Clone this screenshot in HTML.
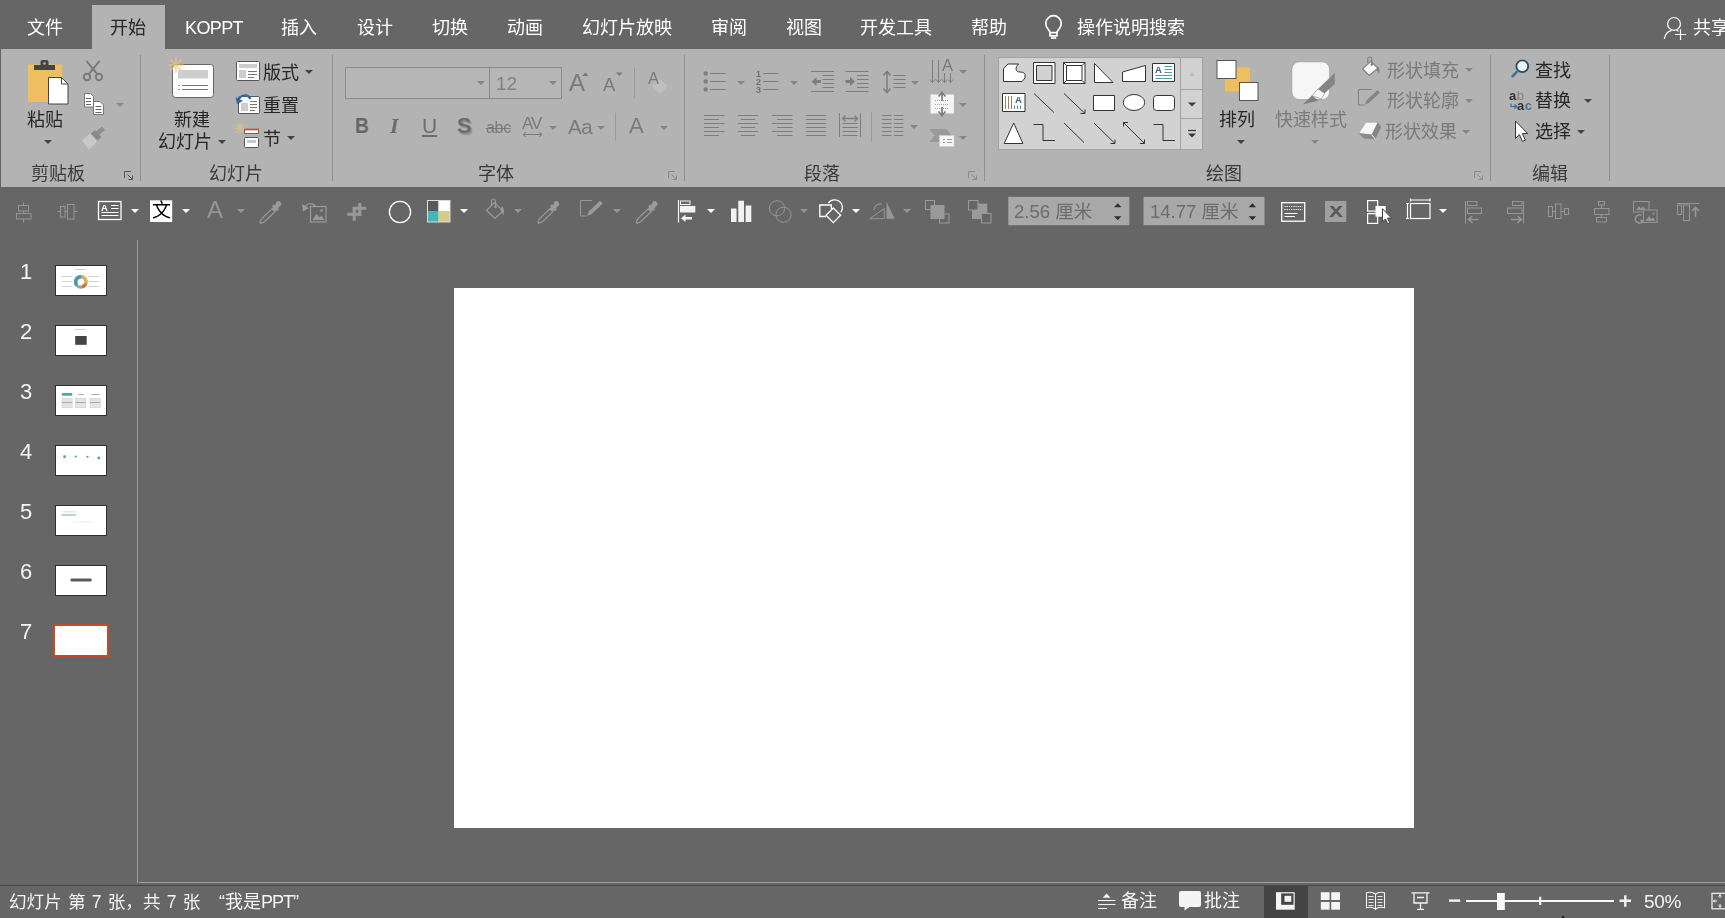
<!DOCTYPE html>
<html lang="zh-CN">
<head>
<meta charset="utf-8">
<title>PowerPoint</title>
<style>
*{box-sizing:border-box;margin:0;padding:0}
html,body{width:1725px;height:918px;overflow:hidden;background:#666666}
body{position:relative;font-family:"Liberation Sans","Noto Sans CJK SC",sans-serif;font-size:18px;color:#fff}
.a{position:absolute}
.t{position:absolute;white-space:nowrap;line-height:24px;height:24px;font-size:18px}
.t,.l{will-change:transform}
.d{color:#262626}
.g{color:#7a7a7a}
.lbl{color:#3a3a3a}
#tabs{position:absolute;left:0;top:0;width:1725px;height:50px;background:#666666}
#acttab{position:absolute;left:92px;top:5px;width:73px;height:46px;background:#b3b3b3}
#ribbon{position:absolute;left:1px;top:49.400px;width:1724px;height:137.600px;background:#b3b3b3}
.sep{position:absolute;top:55px;width:1px;height:126px;background:#8e8e8e}
.arr{position:absolute;width:0;height:0;border-left:4px solid transparent;border-right:4px solid transparent;border-top:4px solid #444}
.arr.w{border-top-color:#fff}
.arr.gr{border-top-color:#858585}
.arr.dg{border-top-color:#969696}
.l{position:absolute;white-space:nowrap;line-height:1;font-family:"Liberation Sans",sans-serif;color:#7a7a7a}
svg{position:absolute;overflow:visible}
#status{position:absolute;left:0;top:885px;width:1725px;height:33px;background:#666666;border-top:1px solid #474747}
</style>
</head>
<body>
<!-- TAB BAR -->
<div id="tabs"></div>
<div id="acttab"></div>
<div id="ribbon"></div>
<!--TABS-->
<div class="t" style="left:27px;top:15.500px">文件</div>
<div class="t d" style="left:110px;top:15.500px">开始</div>
<div class="t" style="left:185px;top:15.500px;letter-spacing:-0.600px">KOPPT</div>
<div class="t" style="left:281px;top:15.500px">插入</div>
<div class="t" style="left:357px;top:15.500px">设计</div>
<div class="t" style="left:432px;top:15.500px">切换</div>
<div class="t" style="left:507px;top:15.500px">动画</div>
<div class="t" style="left:582px;top:15.500px">幻灯片放映</div>
<div class="t" style="left:711px;top:15.500px">审阅</div>
<div class="t" style="left:786px;top:15.500px">视图</div>
<div class="t" style="left:860px;top:15.500px">开发工具</div>
<div class="t" style="left:971px;top:15.500px">帮助</div>
<div class="t" style="left:1077px;top:15.500px">操作说明搜索</div>
<div class="t" style="left:1693px;top:15.500px">共享</div>
<svg style="left:0;top:0" width="1725" height="50" viewBox="0 0 1725 50">
 <path d="M1050 32L1047.600 28.350A7.700 7.700 0 1 1 1059.400 28.350L1057 32V35.800H1050ZM1050 32.700H1057" fill="none" stroke="#fff" stroke-width="1.700" stroke-linejoin="round"/>
 <path d="M1051 38h5.200" stroke="#fff" stroke-width="1.700"/>
 <circle cx="1674" cy="23.900" r="6.400" fill="none" stroke="#fff" stroke-width="1.200"/>
 <path d="M1664.300 38.800c.800-4.500 3.500-7.500 7.300-8.500M1676.500 30.200l2.200 1" fill="none" stroke="#fff" stroke-width="1.200"/>
 <path d="M1675 34.500h11M1680.500 29.300v10.700" stroke="#fff" stroke-width="1.200"/>
</svg>
<!--RIBBON-->
<div class="sep" style="left:140px"></div>
<div class="sep" style="left:332px"></div>
<div class="sep" style="left:684px"></div>
<div class="sep" style="left:984px"></div>
<div class="sep" style="left:1490px"></div>
<div class="sep" style="left:1609px"></div>
<!-- clipboard group -->
<svg style="left:0;top:0" width="345" height="190" viewBox="0 0 345 190">
 <!-- paste -->
 <rect x="28" y="64.5" width="34" height="37.5" fill="#eebf60"/>
 <path d="M34 70v-5h6.5v-3a2 2 0 0 1 2-2h4a2 2 0 0 1 2 2v3H55v5z" fill="#444"/>
 <circle cx="44.5" cy="63.5" r="1.3" fill="#b3b3b3"/>
 <path d="M48.5 77.5h13l6.5 6.5v20h-19.5z" fill="#fff" stroke="#444" stroke-width="1"/>
 <path d="M61.5 77.5v6.5h6.5" fill="none" stroke="#444" stroke-width="1"/>
 <!-- scissors -->
 <g fill="none" stroke="#787878" stroke-width="1.9">
  <circle cx="87" cy="77" r="3.2"/><circle cx="99" cy="77" r="3.2"/>
  <path d="M88.8 74.2L99.5 61M97.2 74.2L86.5 61"/>
 </g>
 <!-- copy -->
 <g fill="#fff" stroke="#777" stroke-width="1">
  <path d="M84.5 93.5h6l3 3v10.5h-9z"/>
  <path d="M93.5 101.5h6.5l3.5 3.5v9.5h-10z"/>
 </g>
 <g stroke="#666" stroke-width="1">
  <path d="M86 98.5h5M86 101.5h5M86 104.5h5M95.5 106.5h6M95.5 109.5h6M95.5 112.5h6"/>
 </g>
 <!-- format painter -->
 <g transform="translate(0 2.5)">
  <path d="M82 138l8-7 7 8-8 8z" fill="#c9c9c4"/>
  <path d="M91 131l4-3.5 6.5 7-4 3.5z" fill="#8a8a8a"/>
  <path d="M96 129l6-5 3 3.5-6 5z" fill="#8f8f8f"/>
 </g>
 <!-- launcher clipboard -->
 <path d="M124.5 178v-6.5h6.5M127.5 174.5l4.5 4.5M132.5 175.5v4h-4" fill="none" stroke="#555" stroke-width="1"/>
 <!-- new slide -->
 <rect x="172.5" y="64.5" width="41" height="33" rx="3" fill="#fcfcfc" stroke="#666" stroke-width="1"/>
 <rect x="178" y="70" width="30" height="8.5" fill="#cdcdcd"/>
 <path d="M182 85.5h26M182 89.5h26M178.5 85.5h1.5M178.5 89.5h1.5" stroke="#777" stroke-width="1"/>
 <g stroke="#efc874" stroke-width="1.700" stroke-linecap="round" opacity="0.700">
  <path d="M176 58v14M169 65h14M171 60l10 10M181 60l-10 10"/>
 </g>
 <!-- layout -->
 <rect x="236.500" y="61.500" width="23" height="19" rx="1" fill="#fcfcfc" stroke="#555"/>
 <rect x="239" y="64" width="18" height="4" fill="#cdcdcd"/>
 <rect x="239" y="70" width="7" height="8" fill="#cdcdcd"/>
 <path d="M248 71.500h9M248 74.500h9M248 77.500h6" stroke="#777"/>
 <!-- reset -->
 <rect x="238.500" y="96.500" width="21" height="17" rx="1" fill="#fcfcfc" stroke="#555"/>
 <rect x="241" y="103" width="7" height="8" fill="#cdcdcd"/>
 <path d="M250 101.500h7M250 104.500h7M250 107.500h7M250 110.500h5" stroke="#777"/>
 <path d="M238.500 101c1-6 9-8 12-2" fill="none" stroke="#2f6aa3" stroke-width="2.200"/>
 <path d="M235.500 97l1.500 7 6-3z" fill="#2f6aa3"/>
 <!-- section -->
 <g stroke="#efc874" stroke-width="1.600" stroke-linecap="round" opacity="0.550">
  <path d="M240 123.500v10M235 128.500h10M236.500 125l7 7M243.500 125l-7 7"/>
 </g>
 <rect x="244.500" y="129.500" width="14" height="4" fill="#fcfcfc" stroke="#666"/>
 <path d="M244 129.500h15" stroke="#d1492a" stroke-width="1.600"/>
 <rect x="244.500" y="137.500" width="14" height="10" rx="1" fill="#fcfcfc" stroke="#555"/>
 <rect x="247" y="140" width="9" height="3" fill="#c3c7d1"/>
</svg>
<div class="t d" style="left:27px;top:107.500px">粘贴</div>
<div class="arr" style="left:43.500px;top:140px"></div>
<div class="arr gr" style="left:116px;top:103px"></div>
<div class="t lbl" style="left:31px;top:162px">剪贴板</div>
<div class="t d" style="left:174px;top:107.500px">新建</div>
<div class="t d" style="left:158px;top:130px">幻灯片</div>
<div class="arr" style="left:217.500px;top:140px"></div>
<div class="t d" style="left:263px;top:60.500px">版式</div>
<div class="arr" style="left:305px;top:70px"></div>
<div class="t d" style="left:263px;top:93.500px">重置</div>
<div class="t d" style="left:263px;top:127px">节</div>
<div class="arr" style="left:286.500px;top:136px"></div>
<div class="t lbl" style="left:208.500px;top:162px">幻灯片</div>
<!-- font group -->
<div class="a" style="left:345px;top:67px;width:145px;height:32px;border:1px solid #8a8a8a;background:#b6b6b6"></div>
<div class="a" style="left:489px;top:67px;width:73px;height:32px;border:1px solid #8a8a8a;background:#b6b6b6"></div>
<div class="arr gr" style="left:476.500px;top:80.500px"></div>
<div class="arr gr" style="left:548.500px;top:80.500px"></div>
<div class="l" style="left:496px;top:74px;font-size:19px;color:#818181">12</div>
<div class="l" style="left:568.500px;top:71px;font-size:24px">A</div>
<div class="l" style="left:603px;top:76px;font-size:18.500px">A</div>
<svg style="left:0;top:0" width="700" height="190" viewBox="0 0 700 190">
 <path d="M582 76l3.300-3.500 3.300 3.500z" fill="#7a7a7a"/>
 <path d="M616 72.500l3.300 3.500 3.300-3.500z" fill="#7a7a7a"/>
 <path d="M634.500 68v30" stroke="#999"/>
 <path d="M615.500 112.500v28" stroke="#999"/>
 <path d="M660 79l7.500 7.500-7.500 7.500-7.500-7.500z" fill="#c0c0c0"/>
 <path d="M523 134.500h19M523 134.500l3-2.500M523 134.500l3 2.500M542 134.500l-3-2.500M542 134.500l-3 2.500" stroke="#7a7a7a" fill="none"/>
 <path d="M668.500 178v-6.500h6.500M671.500 174.500l4.500 4.500M676.500 175.500v4h-4" fill="none" stroke="#8a8a8a" stroke-width="1"/>
</svg>
<div class="l" style="left:647.500px;top:70px;font-size:16.500px">A</div>
<div class="l" style="left:355px;top:115px;font-size:22px;font-weight:bold;color:#666;transform:scaleX(0.880);transform-origin:0 0">B</div>
<div class="l" style="left:390px;top:115px;font-size:22px;font-style:italic;font-family:'Liberation Serif',serif;color:#6c6c6c;font-weight:bold">I</div>
<div class="l" style="left:422px;top:115px;font-size:21px;color:#6c6c6c;text-decoration:underline;text-underline-offset:2px">U</div>
<div class="l" style="left:456.500px;top:115px;font-size:22px;font-weight:bold;color:#6c6c6c;text-shadow:1.500px 1.500px 1px #8f8f8f">S</div>
<div class="l" style="left:485.500px;top:119.500px;font-size:16px;text-decoration:line-through;letter-spacing:-0.300px">abc</div>
<div class="l" style="left:521.500px;top:114.500px;font-size:17px;letter-spacing:-1px">AV</div>
<div class="arr gr" style="left:548.500px;top:126px"></div>
<div class="l" style="left:568px;top:116.500px;font-size:20.500px;letter-spacing:-0.500px">Aa</div>
<div class="arr gr" style="left:596.500px;top:126px"></div>
<div class="l" style="left:628.500px;top:115px;font-size:22px">A</div>
<div class="arr gr" style="left:659.500px;top:126px"></div>
<div class="t lbl" style="left:478px;top:162px">字体</div>
<!-- paragraph group -->
<svg style="left:0;top:0" width="1000" height="190" viewBox="0 0 1000 190">
<g fill="none" stroke="#7d7d7d" stroke-width="1">
 <!-- bullets -->
 <path d="M710 73.500h15.500M710 81.500h15.500M710 89.500h15.500"/>
 <!-- numbering -->
 <path d="M763 73.500h15.500M763 81.500h15.500M763 89.500h15.500"/>
 <!-- decrease indent -->
 <path d="M811 71.500h23M822.500 75.500h11.500M822.500 79.500h11.500M822.500 83.500h11.500M822.500 87.500h11.500M811 91.500h23"/>
 <!-- increase indent -->
 <path d="M845.500 71.500h23M857 75.500h11.500M857 79.500h11.500M857 83.500h11.500M857 87.500h11.500M845.500 91.500h23"/>
 <!-- line spacing -->
 <path d="M893.500 75.500h12M893.500 79.500h12M893.500 83.500h12M893.500 87.500h12"/>
 <path d="M887 72v20M883.500 75.500l3.500-4 3.500 4M883.500 88.500l3.500 4 3.500-4" stroke-width="1.500"/>
 <!-- align left -->
 <path d="M704 115.5h20.5M704 119.5h15M704 123.5h20.5M704 127.5h15M704 131.5h20.5M704 135.5h15"/>
 <path d="M738 115.5h20M741 119.5h14M738 123.5h20M741 127.5h14M738 131.5h20M741 135.5h14"/>
 <path d="M772 115.5h20.5M777 119.5h15.5M772 123.5h20.5M777 127.5h15.5M772 131.5h20.5M777 135.5h15.5"/>
 <path d="M806 115.5h20M806 119.5h20M806 123.5h20M806 127.5h20M806 131.5h20M806 135.5h20"/>
 <!-- distribute -->
 <path d="M839.500 113v24M860.500 113v24M842.500 123.500h15M842.500 127.500h15M842.500 131.500h15M842.500 135.500h15"/>
 <path d="M842.500 118.500h15M845.500 115.500l-3 3 3 3M854.500 115.500l3 3-3 3" stroke-width="1.300"/>
 <!-- columns -->
 <path d="M882 115.5h9.5M882 119.5h9.5M882 123.5h9.5M882 127.5h9.5M882 131.5h9.5M882 135.5h9.5M894 115.5h9.5M894 119.5h9.5M894 123.5h9.5M894 127.5h9.5M894 131.5h9.5M894 135.5h9.5"/>
 <!-- text direction -->
 <path d="M932.500 60v22M938.500 60v22M944.500 73v9M950.500 73v9"/>
 <path d="M930 79.500l2.500 3 2.500-3M936 79.500l2.500 3 2.500-3M942 79.500l2.500 3 2.500-3M948 79.500l2.500 3 2.500-3"/>
 <!-- launcher -->
 <path d="M968.500 178v-6.500h6.500M971.500 174.500l4.500 4.500M976.500 175.500v4h-4" stroke="#8a8a8a"/>
</g>
<g fill="#7d7d7d">
 <circle cx="705.700" cy="73.500" r="2.200"/><circle cx="705.700" cy="81.500" r="2.200"/><circle cx="705.700" cy="89.500" r="2.200"/>
 <path d="M811.500 81.500l5-4.500v3h4.500v3h-4.500v3z"/>
 <path d="M855 81.500l-5-4.500v3h-4.500v3h4.500v3z"/>
</g>
<path d="M634.500 68v30" stroke="#999"/>
<path d="M871.500 112v29" stroke="#999"/>
<!-- align text -->
<rect x="930.500" y="94.500" width="23.500" height="19" fill="#f4f4f4"/>
<path d="M935 100.500h14M935 104.500h14M935 108.500h14" stroke="#aaa" stroke-dasharray="1 1"/>
<path d="M942 93v8M938.500 96.500l3.500-4 3.500 4M942 107v8M938.500 111.500l3.500 4 3.500-4" fill="none" stroke="#7d7d7d" stroke-width="1.700"/>
<!-- smartart -->
<path d="M929.500 129h17l5 6.500-5 6.500h-17l5-6.500z" fill="#9a9a9a"/>
<rect x="939.500" y="135.500" width="14.500" height="11" fill="#f6f6f6" stroke="#cfcfcf" stroke-width="0.600"/>
<path d="M943 139.500h2M947 139.500h5M943 142.500h2M947 142.500h5" stroke="#999"/>
</svg>
<div class="l" style="left:756px;top:69.500px;font-size:9px;line-height:8px;color:#707070;white-space:normal;width:6px;font-weight:bold">1 2 3</div>
<div class="l" style="left:942px;top:57px;font-size:16.500px">A</div>
<div class="arr gr" style="left:736.500px;top:80.500px"></div>
<div class="arr gr" style="left:789.500px;top:80.500px"></div>
<div class="arr gr" style="left:910.500px;top:80.500px"></div>
<div class="arr gr" style="left:909.500px;top:125px"></div>
<div class="arr gr" style="left:958.500px;top:70px"></div>
<div class="arr gr" style="left:958.500px;top:103px"></div>
<div class="arr gr" style="left:958.500px;top:136px"></div>
<div class="t lbl" style="left:804px;top:162px">段落</div>
<!-- drawing group -->
<div class="a" style="left:998px;top:57px;width:205px;height:93px;background:#d2d2d2;border:1px solid #a2a2a2"></div>
<div class="a" style="left:1180px;top:57px;width:23px;height:93px;border:1px solid #a2a2a2"></div>
<div class="a" style="left:1180px;top:89px;width:23px;height:30px;border:1px solid #a2a2a2"></div>
<svg style="left:0;top:0" width="1725" height="190" viewBox="0 0 1725 190">
<g fill="#fff" stroke="#333" stroke-width="1" stroke-linejoin="round">
 <path d="M1003.500 81.500V68.700L1008 64h10.700C1014.700 67.300 1015.300 72 1020 72c3.300 0 5 1.300 5 2.700V78l-3 3.500z"/>
 <rect x="1033.500" y="62.500" width="21.500" height="21"/>
 <rect x="1036.500" y="65.500" width="15.500" height="15" fill="#d2d2d2"/>
 <rect x="1063.500" y="62.500" width="21.500" height="21"/>
 <rect x="1066.500" y="65.500" width="15.500" height="15"/>
 <path d="M1063.500 62.500l3 3M1085 62.500l-3 3M1063.500 83.500l3-3M1085 83.500l-3-3" fill="none"/>
 <path d="M1094.500 63.500v19h18.500z"/>
 <path d="M1122.500 72l23-6.500v16h-23z"/>
 <rect x="1152.500" y="63.500" width="22" height="18"/>
 <rect x="1002.500" y="93.500" width="22.500" height="18"/>
 <rect x="1093.500" y="95.500" width="21" height="15"/>
 <ellipse cx="1134" cy="102.500" rx="10.700" ry="8"/>
 <rect x="1153.500" y="95.500" width="21" height="15" rx="3"/>
 <path d="M1013.700 123l-9.500 20.500h18.700z"/>
 <g fill="none">
  <path d="M1034 93.500l20 19"/>
  <path d="M1064 93.500l21 20M1085 109.500v4h-4.500"/>
  <path d="M1033.500 124.500h9.500v16h12"/>
  <path d="M1064 123l20 19.500"/>
  <path d="M1094 123l21 20.500M1115 139.500v4h-4.500"/>
  <path d="M1123.500 122.500l21 21M1123.500 126.500v-4h4.500M1144.500 139.500v4h-4.500"/>
  <path d="M1153.500 124.500h9.500v16h12"/>
 </g>
</g>
<g fill="none" stroke-width="1">
 <path d="M1164.500 66.500h7.500M1164.500 69.500h7.500M1164.500 72.500h7.500M1155.500 75.500h16.500M1155.500 78.500h16.500" stroke="#5a9a9a"/>
 <path d="M1005.500 96v13M1008.500 96v13M1011.500 96v13" stroke="#a08060"/>
 <path d="M1014.500 105.500v3.500M1017.500 105.500v3.500M1020.500 105.500v3.500" stroke="#5a86a8"/>
</g>
<path d="M1188.500 76l3.500-3.500 3.500 3.500z" fill="#bdbdbd"/>
<path d="M1188 102.500h8l-4 4z" fill="#3a3a3a"/>
<path d="M1188 130.500h8" stroke="#3a3a3a" stroke-width="1.200"/>
<path d="M1188 133.500h8l-4 4z" fill="#3a3a3a"/>
<!-- arrange -->
<rect x="1225" y="67.500" width="25" height="24" fill="#eebf60"/>
<rect x="1217" y="60.500" width="19" height="18" fill="#fff" stroke="#555"/>
<rect x="1239.500" y="82.500" width="18.500" height="18" fill="#fff" stroke="#555"/>
<!-- quick styles -->
<rect x="1291.800" y="61.800" width="37.800" height="37.800" rx="7.500" fill="#f6f6f6" stroke="#9a9a9a" stroke-width="0.700"/>
<path d="M1334.800 72.700v11l-10.300 9.700-6.500-4.400z" fill="#858585"/>
<path d="M1318 89l6.500 4.400-3.300 5.500-9.200-3.300z" fill="#f8f8f8" stroke="#8a8a8a" stroke-width="0.600"/>
<path d="M1312 95.600l6.500 5-15.800 3.900z" fill="#808080"/>
<!-- shape fill -->
<g fill="none" stroke="#808080" stroke-width="1.200">
 <path d="M1362.600 68.900l8.200-7.600 7.100 7-8.700 7.100z" fill="#f6f6f6"/>
 <path d="M1367.800 63v-4a2 2 0 0 1 4 0v5.500"/>
 <circle cx="1371.800" cy="64.500" r="1.300" fill="#808080" stroke="none"/>
 <path d="M1378 66c1.500 2 1.800 5 1 8-.800-2-1.500-3-2.500-4z" fill="#808080" stroke="none"/>
 <!-- shape outline -->
 <path d="M1372 89.500h-13.500v15.500h6" stroke-width="1"/>
 <path d="M1365 104.500l1.500-4 11-10.500 2.500 2.500-11 10.500z" fill="#858585" stroke="none"/>
</g>
<!-- shape effects -->
<path d="M1358.800 133.200l7.100-10.900h12l-6 12.500z" fill="#f6f6f6" stroke="#a5a5a5" stroke-width="0.600"/>
<path d="M1377.900 122.300l3.300 4.900-6 12-3.300-4.400z" fill="#858585"/>
<path d="M1358.800 133.200l13.100 1.600 3.300 4.400-11.500-.600z" fill="#8a8a8a"/>
<path d="M1371.900 134.800l3.300 4.400" stroke="#f0f0f0" stroke-width="1"/>
<!-- launcher -->
<path d="M1474.500 178v-6.500h6.500M1477.500 174.500l4.500 4.500M1482.500 175.500v4h-4" fill="none" stroke="#8a8a8a"/>
<!-- find -->
<circle cx="1522.300" cy="66.200" r="5.900" fill="#e9f4fc" stroke="#2c4a60" stroke-width="1.800"/>
<path d="M1517.800 70.800l-5.300 5.500" stroke="#3f7396" stroke-width="2.600" stroke-linecap="round"/>
<!-- replace arrow -->
<path d="M1511 103.500v3h5.500M1514.500 104.500l2.200 2-2.200 2" fill="none" stroke="#2f6aa3" stroke-width="1.200"/>
<!-- select -->
<path d="M1515.500 121v17.500l4-3.800 3 6.800 2.800-1.300-3-6.600h5.500z" fill="#fff" stroke="#333" stroke-width="1" stroke-linejoin="round"/>
</svg>
<div class="l" style="left:1155.300px;top:64.500px;font-size:9.500px;font-weight:bold;color:#2e5f8a">A</div>
<div class="l" style="left:1015.300px;top:94.500px;font-size:9.500px;font-weight:bold;color:#2e5f8a">A</div>
<div class="t d" style="left:1219px;top:107.500px">排列</div>
<div class="arr" style="left:1236.500px;top:140px"></div>
<div class="t g" style="left:1275px;top:107.500px">快速样式</div>
<div class="arr gr" style="left:1310.500px;top:140px"></div>
<div class="t g" style="left:1386.500px;top:58.800px">形状填充</div>
<div class="arr gr" style="left:1464.500px;top:68px"></div>
<div class="t g" style="left:1386.500px;top:89px">形状轮廓</div>
<div class="arr gr" style="left:1464.500px;top:98.500px"></div>
<div class="t g" style="left:1384.500px;top:120px">形状效果</div>
<div class="arr gr" style="left:1462px;top:129.500px"></div>
<div class="t lbl" style="left:1206px;top:162px">绘图</div>
<!-- editing -->
<div class="t d" style="left:1534.500px;top:58.800px">查找</div>
<div class="l" style="left:1509px;top:89px;font-size:13px;color:#333;font-weight:bold;letter-spacing:0.500px">a<span style="color:#808080;font-weight:normal">b</span></div>
<div class="l" style="left:1517px;top:98.500px;font-size:13px;color:#333;font-weight:bold;letter-spacing:0.500px">a<span style="color:#47708f">c</span></div>
<div class="t d" style="left:1534.500px;top:89px">替换</div>
<div class="arr" style="left:1584px;top:98.500px"></div>
<div class="t d" style="left:1534.500px;top:120px">选择</div>
<div class="arr" style="left:1576.500px;top:130px"></div>
<div class="t lbl" style="left:1531.500px;top:162px">编辑</div>
<!--TOOLBAR-->
<svg style="left:0;top:0" width="1725" height="240" viewBox="0 0 1725 240">
<g fill="none" stroke="#969696" stroke-width="1">
 <!-- 1 align center -->
 <path d="M23.500 202.500v20"/><rect x="18.500" y="205.500" width="10" height="5.500" fill="#666"/><rect x="16.500" y="213.500" width="14.500" height="5.500" fill="#666"/>
 <!-- 2 distribute h -->
 <path d="M57.500 211.500h20"/><rect x="60.500" y="206.500" width="4.500" height="10.500" fill="#666"/><rect x="67.500" y="204.500" width="6.500" height="14.500" fill="#666"/>
</g>
<!-- 3 textbox -->
<rect x="98.500" y="201.500" width="22.500" height="18" fill="none" stroke="#fff" stroke-width="1.300"/>
<path d="M111 205.500h7.500M111 208.500h7.500M101.500 212.500h17M101.500 215.500h17" stroke="#fff" stroke-width="1"/>
<!-- 4 wen box -->
<rect x="150" y="200.300" width="22.200" height="21.700" fill="#fff"/>
<g transform="translate(259.5 200.8)"><path d="M17.500 0.500c2-1.500 5.500 1.500 4 4l-3 3 1 1-2 2-1-1-1.500 1.500-3-3 1.500-1.500-1-1 2-2 1 1z" fill="#9a9a9a"/><path d="M12.500 8l3 3-10.500 10-3.500 1.500-1-1 1.500-3.500z" fill="none" stroke="#9a9a9a" stroke-width="1.200"/></g>
<!-- 7 reset picture -->
<g fill="none" stroke="#9a9a9a" stroke-width="1.200">
 <rect x="310.500" y="206.500" width="15.500" height="15.500"/>
 <path d="M304.500 208.500c1-5 8-7 11-2"/>
</g>
<path d="M302 204l1 7.500 6-3.500z" fill="#9a9a9a"/>
<path d="M312.500 220l4-6 3 3.500 2-2 3 4.500z" fill="#9a9a9a"/><circle cx="321.500" cy="210.500" r="1.300" fill="#9a9a9a"/>
<!-- 8 crop -->
<path d="M359.800 202.900V216M352.500 208.300h13.700M347.400 214.300h14M354.200 206.800v14" fill="none" stroke="#999" stroke-width="3"/>
<!-- 9 circle -->
<circle cx="400" cy="212" r="10.600" fill="none" stroke="#fff" stroke-width="1.300"/>
<!-- 10 theme colours -->
<rect x="427" y="200" width="23.500" height="22.500" fill="#dcdcdc"/>
<rect x="428" y="201" width="10.500" height="10" fill="#595959"/><rect x="438.500" y="201" width="11" height="10" fill="#ffffff"/>
<rect x="428" y="211" width="10.500" height="10.500" fill="#41b7b9"/><rect x="438.500" y="211" width="11" height="10.500" fill="#d3cd86"/>
<!-- 11 bucket -->
<g fill="none" stroke="#9a9a9a" stroke-width="1.200">
 <path d="M486.500 210.500l8-8 8.500 8.500-8 7.500z"/>
 <path d="M491.500 205v-4a2 2 0 0 1 4 0v6"/>
</g>
<circle cx="495.500" cy="207" r="1.300" fill="#9a9a9a"/>
<path d="M502 206c2 2 2.500 6 1.500 9.500-.800-2.500-1.500-3.500-3-5z" fill="#9a9a9a"/>
<g transform="translate(537.4 200.8)"><path d="M17.500 0.500c2-1.500 5.500 1.500 4 4l-3 3 1 1-2 2-1-1-1.500 1.500-3-3 1.500-1.500-1-1 2-2 1 1z" fill="#9a9a9a"/><path d="M12.500 8l3 3-10.500 10-3.500 1.500-1-1 1.500-3.500z" fill="none" stroke="#9a9a9a" stroke-width="1.200"/></g>
<!-- 13 outline pen -->
<path d="M592 200.500h-11.500v15.500h6" fill="none" stroke="#9a9a9a" stroke-width="1"/>
<path d="M587 215.800l1.500-4 11.500-11 2.700 2.700-11.500 11z" fill="#9a9a9a"/>
<g transform="translate(635.7 200.8)"><path d="M17.500 0.500c2-1.500 5.500 1.500 4 4l-3 3 1 1-2 2-1-1-1.500 1.500-3-3 1.500-1.500-1-1 2-2 1 1z" fill="#9a9a9a"/><path d="M12.500 8l3 3-10.500 10-3.500 1.500-1-1 1.500-3.500z" fill="none" stroke="#9a9a9a" stroke-width="1.200"/></g>
<!-- 15 align left white -->
<path d="M678.500 200v22.500" stroke="#f2f2f2" stroke-width="1.200"/>
<rect x="680.500" y="201" width="9.500" height="3.500" fill="none" stroke="#f2f2f2"/>
<rect x="680" y="206" width="15.300" height="6.500" fill="#f2f2f2"/>
<path d="M681 218.200l4.500-3.700v2.400h6.500v2.600h-6.500v2.400z" fill="#f2f2f2"/>
<!-- 16 bars -->
<path d="M731 222v-13.400h5.500V222zM738.300 222v-21.200h5.700V222zM745.600 222v-16.500h5.700V222z" fill="#f2f2f2"/>
<!-- 17 merge -->
<circle cx="777" cy="208.300" r="7.600" fill="none" stroke="#969696" stroke-width="1"/><circle cx="783.500" cy="214.700" r="7.600" fill="none" stroke="#969696" stroke-width="1"/>
<!-- 18 shapes -->
<g fill="none" stroke="#fff" stroke-width="1.300">
 <path d="M828.300 203a7.200 7.200 0 1 1 12.600 9.300"/>
 <path d="M831.300 209v-4h-11.500v11.500h6"/>
 <path d="M833.300 208l7.300 7.300-7.300 7.300-7.300-7.300z" fill="#666"/>
</g>
<!-- 19 rotate -->
<path d="M886.500 201.700l8.300 17h-8.300z" fill="#969696"/>
<path d="M884.300 208.600v10.100h-14.700z" fill="none" stroke="#969696"/>
<path d="M874 210c0-4 4-7 8-6" fill="none" stroke="#969696" stroke-width="1.200"/>
<!-- 20 bring forward -->
<g fill="none" stroke="#9a9a9a">
 <rect x="925.500" y="200.500" width="9" height="9"/><rect x="939.500" y="214" width="9.500" height="9"/>
</g>
<rect x="930.500" y="205" width="14" height="14" fill="#9a9a9a"/>
<rect x="972" y="203.600" width="15.300" height="15.400" fill="#9a9a9a"/>
<rect x="968.500" y="200.500" width="9.500" height="9.500" fill="#666" stroke="#9a9a9a"/>
<rect x="981.500" y="213.500" width="9.500" height="9.500" fill="#666" stroke="#9a9a9a"/>
<!-- inputs -->
<rect x="1008.300" y="196.800" width="121" height="28.400" fill="#a8a8a8"/>
<rect x="1143.500" y="196.800" width="121" height="28.400" fill="#a8a8a8"/>
<path d="M1114 207.300h7.400l-3.700-4zM1114 216.200h7.400l-3.700 4zM1248.700 207.300h7.400l-3.700-4zM1248.700 216.200h7.400l-3.700 4z" fill="#2e2e2e"/>
<!-- 23 keyboard -->
<rect x="1281.700" y="202.700" width="23" height="18.500" fill="none" stroke="#fff" stroke-width="1.300"/>
<path d="M1284.500 206.500h18M1284.500 209.500h18" stroke="#fff" stroke-dasharray="1.200 1"/>
<path d="M1284.500 213.500h13M1284.500 216.500h10.500" stroke="#fff"/>
<!-- 24 x -->
<rect x="1325" y="201" width="21.300" height="21" fill="#9f9f9f"/>
<!-- 25 selection -->
<g fill="none" stroke="#fff" stroke-width="1.200">
 <rect x="1367.600" y="200.600" width="10" height="10.500"/><rect x="1367.600" y="213.600" width="10" height="9.800"/>
</g>
<rect x="1375.500" y="206" width="10.200" height="10.700" fill="#fff"/>
<path d="M1382.500 208.700v13l3-2.700 2.200 4.800 2-.900-2.200-4.800h4z" fill="#fff" stroke="#444" stroke-width="1" stroke-linejoin="round"/>
<!-- 26 size -->
<g fill="none" stroke="#fff" stroke-width="1.200">
 <rect x="1410.500" y="203.500" width="19.500" height="15"/>
 <path d="M1410.500 200h19.500M1410.500 198.500v3M1430 198.500v3M1407.500 203.500v15M1406 203.500h3M1406 218.500h3"/>
</g>
<!-- 27 align left gray -->
<g fill="none" stroke="#969696">
 <path d="M1465.500 201v22.500"/><rect x="1467.500" y="201.500" width="9.500" height="4"/><rect x="1467.500" y="208" width="14" height="5.500"/>
 <path d="M1478.500 219.500h-10M1472.500 216l-4 3.500 4 3.500" stroke-width="1.600"/>
 <!-- 28 align right gray -->
 <path d="M1523.500 201v22.500"/><rect x="1512.500" y="201.500" width="9.500" height="4"/><rect x="1507.500" y="208" width="14.500" height="5.500"/>
 <path d="M1511 219.500h10.500M1517.500 216l4 3.500-4 3.500" stroke-width="1.600"/>
 <!-- 29 -->
 <path d="M1547.500 211.500h21.500"/><rect x="1548.500" y="206.500" width="4" height="10" fill="#666"/><rect x="1555.500" y="204" width="5.500" height="14.500" fill="#666"/><rect x="1564.500" y="208.500" width="4" height="6" fill="#666"/>
 <!-- 30 -->
 <path d="M1601.500 201v21"/><rect x="1598.500" y="201.500" width="6" height="3.500" fill="#666"/><rect x="1594.500" y="208.500" width="14.500" height="6" fill="#666"/><rect x="1596.500" y="217.500" width="10" height="4.500" fill="#666"/>
 <!-- 31 -->
 <rect x="1633.500" y="201.500" width="15.500" height="10.500"/><rect x="1643.500" y="210" width="13.500" height="12.500" fill="#666"/>
 <path d="M1641.500 215.500a4 4 0 1 0 .5 6.500" stroke-width="1.500"/>
 <!-- 32 -->
 <path d="M1677 203.500h22"/><rect x="1677.500" y="205" width="4" height="9.500"/><rect x="1683.500" y="205" width="6" height="15.500"/>
 <path d="M1695.500 217v-9.500M1692 211l3.500-3.500 3.500 3.500" stroke-width="1.600"/>
</g>
<path d="M1645.500 221l3.500-5 2.500 3 1.500-1.500 2.500 3.500z" fill="#969696"/><circle cx="1653.500" cy="213.500" r="1" fill="#969696"/>
<path d="M1636 210l3-4 2 2.500 2-2 3 3.500z" fill="#969696"/>
<path d="M1639.500 219.500l4 .5-.5 3.500z" fill="#969696"/>
</svg>
<div class="l" style="left:100.500px;top:203px;font-size:9.500px;font-weight:bold;color:#fff">A</div>
<div class="t" style="left:152px;top:199px;color:#000;font-size:19px">文</div>
<div class="l" style="left:207px;top:198px;font-size:24px;color:#969696">A</div>
<div class="l" style="left:1328.700px;top:200.600px;font-size:19.500px;font-weight:bold;color:#5a5a5a;transform:scaleX(1.300);transform-origin:0 0">x</div>
<div class="t" style="left:1014px;top:199.500px;color:#6c6c6c;font-size:18.500px">2.56 厘米</div>
<div class="t" style="left:1149.500px;top:199.500px;color:#6c6c6c;font-size:18.500px">14.77 厘米</div>
<div class="arr w" style="left:130.500px;top:209px"></div>
<div class="arr w" style="left:181.500px;top:209px"></div>
<div class="arr dg" style="left:237px;top:209px"></div>
<div class="arr w" style="left:459.500px;top:209px"></div>
<div class="arr dg" style="left:514px;top:209px"></div>
<div class="arr dg" style="left:613px;top:209px"></div>
<div class="arr w" style="left:706.500px;top:209px"></div>
<div class="arr dg" style="left:800px;top:209px"></div>
<div class="arr w" style="left:851.500px;top:209px"></div>
<div class="arr dg" style="left:902.500px;top:209px"></div>
<div class="arr w" style="left:1438.500px;top:209px"></div>
<!--LEFT-->
<div class="a" style="left:137px;top:240px;width:1px;height:643px;background:#9c9c9c"></div>
<div class="a" style="left:139px;top:882px;width:1586px;height:1px;background:#9c9c9c"></div>
<div class="l" style="left:20px;top:261.4px;font-size:22px;color:#f4f4f4">1</div>
<div class="a" style="left:55px;top:265px;width:52px;height:30.500px;background:#fff;border:1px solid #2f2f2f"></div>
<div class="l" style="left:20px;top:321.4px;font-size:22px;color:#f4f4f4">2</div>
<div class="a" style="left:55px;top:325px;width:52px;height:30.500px;background:#fff;border:1px solid #2f2f2f"></div>
<div class="l" style="left:20px;top:381.4px;font-size:22px;color:#f4f4f4">3</div>
<div class="a" style="left:55px;top:385px;width:52px;height:30.500px;background:#fff;border:1px solid #2f2f2f"></div>
<div class="l" style="left:20px;top:441.4px;font-size:22px;color:#f4f4f4">4</div>
<div class="a" style="left:55px;top:445px;width:52px;height:30.500px;background:#fff;border:1px solid #2f2f2f"></div>
<div class="l" style="left:20px;top:501.4px;font-size:22px;color:#f4f4f4">5</div>
<div class="a" style="left:55px;top:505px;width:52px;height:30.500px;background:#fff;border:1px solid #2f2f2f"></div>
<div class="l" style="left:20px;top:561.4px;font-size:22px;color:#f4f4f4">6</div>
<div class="a" style="left:55px;top:565px;width:52px;height:30.500px;background:#fff;border:1px solid #2f2f2f"></div>
<div class="l" style="left:20px;top:621.4px;font-size:22px;color:#f4f4f4">7</div>
<div class="a" style="left:53px;top:623.800px;width:55.500px;height:32.800px;background:#fff;border:2.600px solid #c9472a"></div>
<svg style="left:0;top:0" width="140" height="700" viewBox="0 0 140 700">
 <!-- thumb 1 -->
 <circle cx="80.800" cy="281.900" r="5.200" fill="none" stroke="#9aa4ad" stroke-width="3.400"/>
 <path d="M80.800 276.700a5.200 5.200 0 0 0 -4 8.500" fill="none" stroke="#4c9aa6" stroke-width="3.400"/>
 <path d="M82.200 276.900a5.200 5.200 0 0 1 3.700 6" fill="none" stroke="#e3b35a" stroke-width="3.400"/>
 <path d="M85.600 284a5.200 5.200 0 0 1 -3.500 2.900" fill="none" stroke="#d8742e" stroke-width="3.400"/>
 <path d="M61.500 276.500h11M62 281.500h10.500M61.500 286.500h11M88.500 276.500h11M89 281.500h10.500M88.500 286.500h11" stroke="#c4c8cc" stroke-width="0.800"/>
 <path d="M75 269.500h11" stroke="#bbb" stroke-width="0.700"/>
 <!-- thumb 2 -->
 <rect x="75.200" y="336" width="11.500" height="8.800" fill="#454545"/>
 <path d="M75 329.500h11" stroke="#bbb" stroke-width="0.700"/>
 <!-- thumb 3 -->
 <rect x="62" y="393" width="10.200" height="2.700" fill="#4aa89f"/>
 <path d="M78 394.500h6M91.500 394.500h8" stroke="#999" stroke-width="0.800"/>
 <g fill="#e4e4e4" stroke="#c8c8c8" stroke-width="0.500"><rect x="62" y="398.500" width="10.200" height="9.300"/><rect x="75.600" y="398.500" width="10.200" height="9.300"/><rect x="90" y="398.500" width="10.200" height="9.300"/></g>
 <path d="M62 402.500h10.200M75.600 402.500h10.200M90 402.500h10.200" stroke="#9a9a9a" stroke-width="0.800"/>
 <!-- thumb 4 -->
 <g fill="#4aa89f"><rect x="63.400" y="455.300" width="2.300" height="2.800"/><circle cx="75.800" cy="456.600" r="1.100"/><circle cx="87.500" cy="456.800" r="1.100"/><circle cx="98.800" cy="458" r="1.400"/></g>
 <!-- thumb 5 -->
 <path d="M61.500 515h14.500" stroke="#5aa3a8" stroke-width="0.900"/><path d="M62.500 511.800h13" stroke="#b9d3d6" stroke-width="0.700"/><path d="M73 522h18.500" stroke="#dde5e6" stroke-width="0.700"/>
 <!-- thumb 6 -->
 <rect x="70.600" y="578.400" width="21" height="3.200" rx="0.800" fill="#5a5a5a"/>
</svg>
<!--SLIDE-->
<div class="a" style="left:454px;top:288px;width:960px;height:540px;background:#fff"></div>
<!--STATUS-->
<div id="status"></div>
<div class="a" style="left:1263.500px;top:886px;width:44.500px;height:32px;background:#444"></div>
<div class="t" style="left:9px;top:889.500px;font-size:17.600px;color:#f4f4f4;word-spacing:1.300px">幻灯片 第 7 张，</div>
<div class="t" style="left:142.500px;top:889.500px;font-size:17.600px;color:#f4f4f4;word-spacing:1.300px">共 7 张</div>
<div class="t" style="left:218.500px;top:889.500px;font-size:18px;color:#f4f4f4">“我是<span style="letter-spacing:-1px">PPT</span>”</div>
<div class="t" style="left:1121px;top:888.500px;font-size:18px;color:#f4f4f4">备注</div>
<div class="t" style="left:1204px;top:888.500px;font-size:18px;color:#f4f4f4">批注</div>
<div class="l" style="left:1644px;top:891.500px;font-size:19px;color:#f4f4f4;letter-spacing:-0.300px">50%</div>
<svg style="left:0;top:870px" width="1725" height="48" viewBox="0 870 1725 48">
 <g stroke="#f4f4f4" fill="none">
  <path d="M1098 900.500h17.500M1098 904.500h17.500M1098 908.500h9"/>
 </g>
 <path d="M1102.700 897.800l3.900-4.200 3.900 4.200z" fill="#f4f4f4"/>
 <path d="M1181 891h18a2 2 0 0 1 2 2v12a2 2 0 0 1-2 2h-9.500l-5 3.500v-3.500h-3.500a2 2 0 0 1-2-2v-12a2 2 0 0 1 2-2z" fill="#f4f4f4"/>
 <!-- normal view -->
 <rect x="1276" y="892.200" width="18.700" height="17.500" fill="#f4f4f4"/>
 <rect x="1281.200" y="893.400" width="12.300" height="11.400" fill="#444"/>
 <rect x="1284.500" y="895.800" width="6.800" height="6" fill="#f4f4f4"/>
 <!-- sorter -->
 <g fill="#f4f4f4"><rect x="1320.800" y="892.200" width="8.800" height="7.800"/><rect x="1331.200" y="892.200" width="8.800" height="7.800"/><rect x="1320.800" y="902" width="8.800" height="7.700"/><rect x="1331.200" y="902" width="8.800" height="7.700"/></g>
 <!-- reading -->
 <g stroke="#f4f4f4" fill="none" stroke-width="1.100">
  <path d="M1375.500 894c-2.500-1.700-6-2-9-1.300v15c3-.700 6.500-.400 9 1.300 2.500-1.700 6-2 9-1.300v-15c-3-.700-6.500-.400-9 1.300zM1375.500 894v16"/>
  <path d="M1368.500 896.500h5M1368.500 899.500h5M1368.500 902.500h5M1368.500 905.500h5M1377.500 896.500h5M1377.500 899.500h5M1377.500 902.500h5M1377.500 905.500h5" stroke-width="0.900"/>
 </g>
 <!-- slideshow -->
 <g stroke="#f4f4f4" fill="none" stroke-width="1.300">
  <path d="M1411.500 892.800h18M1414 893v10h13v-10M1420.500 903v6M1417 909.300h7M1417 897.500h7"/>
 </g>
 <!-- zoom slider -->
 <path d="M1449 900.600h11.200" stroke="#f4f4f4" stroke-width="2.400"/>
 <path d="M1466 901h148" stroke="#f8f8f8" stroke-width="2"/>
 <rect x="1497" y="893" width="7.800" height="17" fill="#fafafa"/>
 <path d="M1540.200 896.800v8.200" stroke="#f4f4f4" stroke-width="2.200"/>
 <path d="M1562 915.300v2.700h3z" fill="#111"/>
 <path d="M1619.500 900.800h11.500M1625.300 895.200v11.600" stroke="#f4f4f4" stroke-width="2.400"/>
 <!-- fit -->
 <rect x="1712" y="893.300" width="16" height="15.500" fill="none" stroke="#f4f4f4" stroke-width="1.200"/>
 <path d="M1720 894v4M1720 904v4M1713 901h4" stroke="#f4f4f4" stroke-width="1"/>
 <path d="M1718.500 896.500l1.500-1.500 1.500 1.500M1718.500 905.500l1.500 1.500 1.500-1.500M1715 899.500l-1.500 1.500 1.500 1.500" stroke="#f4f4f4" fill="none" stroke-width="0.900"/>
</svg>
</body>
</html>
